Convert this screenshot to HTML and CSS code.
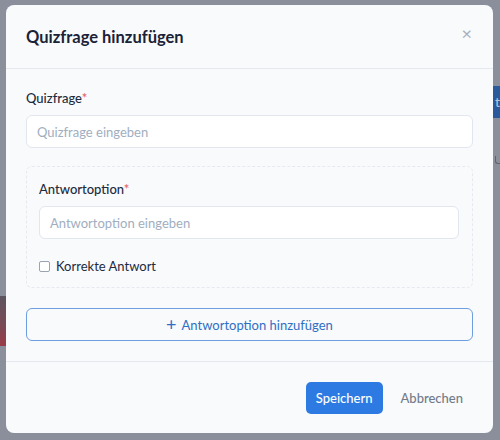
FILE: index.html
```html
<!DOCTYPE html>
<html lang="de">
<head>
<meta charset="utf-8">
<link rel="stylesheet" href="styles.css">
</head>
<body>
<div class="backdrop">
  <div class="bg-btn">t</div>
  <div class="bg-mark"></div>
  <div class="bg-img"></div>
</div>
<div class="modal">
  <div class="modal-header">
    <h2 class="modal-title">Quizfrage hinzufügen</h2>
    <span class="close">×</span>
  </div>
  <div class="modal-body">
    <label class="label">Quizfrage<span class="req">*</span></label>
    <div class="input">Quizfrage eingeben</div>
    <div class="option-box">
      <label class="label">Antwortoption<span class="req">*</span></label>
      <div class="input">Antwortoption eingeben</div>
      <label class="check"><span class="checkbox"></span>Korrekte Antwort</label>
    </div>
    <div class="add-btn"><span class="plus">+</span>Antwortoption hinzufügen</div>
  </div>
  <div class="modal-footer">
    <div class="btn-primary">Speichern</div>
    <div class="btn-link">Abbrechen</div>
  </div>
</div>
</body>
</html>
```
FILE: styles.css
```css
html, body {
  margin: 0;
  padding: 0;
}
body {
  width: 500px;
  height: 440px;
  background: #8a8f9b;
  font-family: Lato, "Noto Sans", sans-serif;
  position: relative;
  overflow: hidden;
  padding-top: 5px;
  box-sizing: border-box;
}
.backdrop .bg-btn {
  position: absolute;
  left: 493px;
  top: 86px;
  width: 12px;
  height: 32px;
  background: #2b5a9c;
  color: #b9c6dc;
  font-size: 14px;
  line-height: 32px;
  padding-left: 2px;
}
.backdrop .bg-mark {
  position: absolute;
  left: 495px;
  top: 156px;
  width: 5px;
  height: 7px;
  border-left: 1px solid #5e6470;
  border-bottom: 1px solid #5e6470;
  border-bottom-left-radius: 3px;
}
.backdrop .bg-img {
  position: absolute;
  left: 0;
  top: 296px;
  width: 6px;
  height: 50px;
  background: linear-gradient(#5c5460, #7b4a55 60%, #9a3a48);
}
.modal {
  position: relative;
  margin-left: 6px;
  width: 487px;
  height: 428px;
  background: #f8fafc;
  border-radius: 8px;
  display: flex;
  flex-direction: column;
  overflow: hidden;
}
.modal-header {
  height: 64px;
  box-sizing: border-box;
  border-bottom: 1px solid #e5e9ef;
  display: flex;
  align-items: center;
  justify-content: space-between;
  padding: 0 21px 0 20px;
}
.modal-title {
  margin: 0;
  font-size: 16.5px;
  font-weight: 700;
  color: #1a2238;
}
.close {
  color: #a9afba;
  font-size: 18px;
  line-height: 1;
  margin-top: -8px;
}
.modal-body {
  padding: 20px 20px 20px 20px;
  border-bottom: 1px solid #e5e9ef;
}
.label {
  display: block;
  font-size: 13px;
  font-weight: 500;
  color: #222b3c;
  line-height: 18px;
  margin-bottom: 8px;
}
.req {
  color: #e25d5d;
}
.input {
  height: 33px;
  box-sizing: border-box;
  border: 1px solid #e2e6ee;
  border-radius: 6px;
  background: #fff;
  font-size: 13px;
  color: #a0aec0;
  padding: 0 10px;
  display: flex;
  align-items: center;
}
.option-box {
  margin-top: 18px;
  border: 1px dashed #e6e9ef;
  border-radius: 6px;
  padding: 13px 13px 13px 12px;
}
.check {
  display: flex;
  align-items: center;
  margin-top: 19px;
  font-size: 13px;
  color: #222b3c;
}
.checkbox {
  width: 9px;
  height: 9px;
  border: 1px solid #9aa3b0;
  border-radius: 2px;
  background: #fff;
  margin-right: 6px;
}
.add-btn {
  margin-top: 20px;
  height: 33px;
  box-sizing: border-box;
  border: 1px solid #6e9ee0;
  border-radius: 6px;
  color: #2f6fc4;
  font-size: 13px;
  display: flex;
  align-items: center;
  justify-content: center;
}
.plus {
  font-size: 18px;
  margin-right: 5px;
  margin-top: -2px;
}
.modal-footer {
  flex: 1;
  display: flex;
  align-items: center;
  justify-content: flex-end;
  padding: 0 30px 0 0;
  gap: 18px;
}
.btn-primary {
  background: #2d7be2;
  color: #fff;
  font-size: 13px;
  font-weight: 500;
  border-radius: 5px;
  height: 32px;
  padding: 0 10px;
  display: flex;
  align-items: center;
}
.btn-link {
  color: #737b89;
  font-size: 13px;
  font-weight: 500;
}
```
